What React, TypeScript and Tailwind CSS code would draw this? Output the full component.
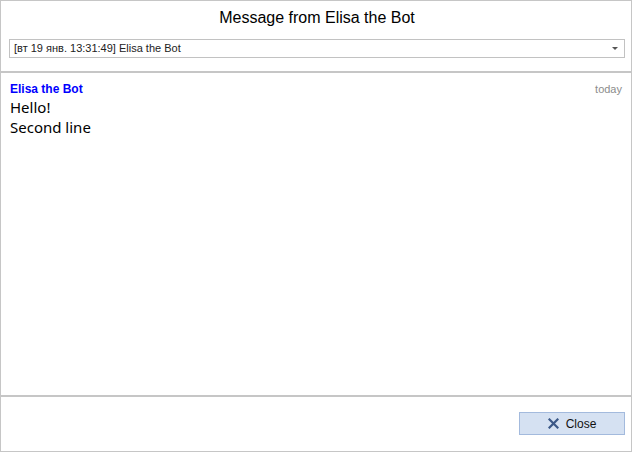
import React from 'react';

const App: React.FC = () => {
  return (
    <div className="w-[632px] h-[452px] bg-white border border-[#c6c6c6] flex flex-col font-['Liberation_Sans',Arial,sans-serif] text-black">
      {/* Header: title + message picker */}
      <div className="pt-[7px] pb-[13px] pl-[8px] pr-[6px] border-b-2 border-[#c6c6c6]">
        <h1 className="text-[16px] leading-[20px] text-center">Message from Elisa the Bot</h1>
        <div className="mt-[11px] h-[19px] border border-[#c2c2c2] flex items-center justify-between pl-[4px] pr-[6px]">
          <span className="text-[11px] leading-[13px] text-[#222]">[вт 19 янв. 13:31:49] Elisa the Bot</span>
          <svg width="6" height="3" viewBox="0 0 6 3">
            <path d="M0 0 H6 L3 3 Z" fill="#555" />
          </svg>
        </div>
      </div>

      {/* Message body */}
      <div className="flex-1 pt-[9px] pl-[9px] pr-[9px]">
        <div className="flex justify-between items-center h-[14px]">
          <span className="text-[12px] leading-[14px] font-bold text-[#0000ff]">Elisa the Bot</span>
          <span className="text-[11px] leading-[14px] text-[#8c8c8c]">today</span>
        </div>
        <div className="font-['Noto_Sans',sans-serif] text-[15px] leading-[20px] text-black mt-[1px]">
          <div>Hello!</div>
          <div>Second line</div>
        </div>
      </div>

      {/* Footer */}
      <div className="h-[56px] border-t-2 border-[#c6c6c6] flex justify-end items-start pt-[15px] pr-[6px]">
        <button className="w-[106px] h-[23px] bg-[#d5e1f2] border border-[#a3badd] flex items-center justify-center gap-[7px]">
          <svg width="11" height="11" viewBox="0 0 11 11">
            <path d="M1.5 1.5 L9.5 9.5 M9.5 1.5 L1.5 9.5" stroke="#3b5887" strokeWidth="2.2" strokeLinecap="square" />
          </svg>
          <span className="text-[12px] leading-[14px] text-[#111]">Close</span>
        </button>
      </div>
    </div>
  );
};

export default App;
